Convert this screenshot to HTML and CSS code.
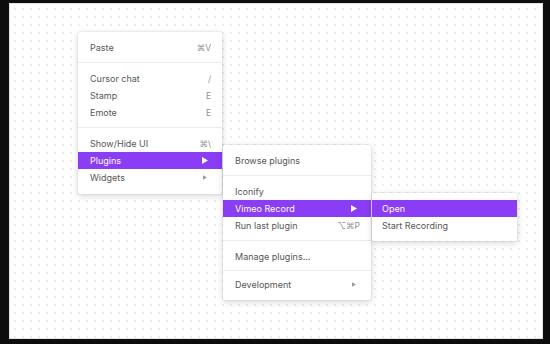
FILE: index.html
```html
<!DOCTYPE html>
<html lang="en">
<head>
  <meta charset="UTF-8">
  <title>Context menu</title>
  <link rel="stylesheet" href="styles.css">
</head>
<body>

  <div class="canvas">

    <div class="menu menu-main">
      <div class="item"><span>Paste</span><span class="key">⌘V</span></div>
      <div class="sep"></div>
      <div class="item"><span>Cursor chat</span><span class="key">/</span></div>
      <div class="item"><span>Stamp</span><span class="key">E</span></div>
      <div class="item"><span>Emote</span><span class="key">E</span></div>
      <div class="sep"></div>
      <div class="item"><span>Show/Hide UI</span><span class="key">⌘\</span></div>
      <div class="item active"><span>Plugins</span>
        <svg class="arrow" width="6" height="7" viewBox="0 0 6 7"><path d="M0 0L6 3.5L0 7Z"/></svg>
      </div>
      <div class="item"><span>Widgets</span>
        <svg class="arrow small" width="4" height="5" viewBox="0 0 6 7"><path d="M0 0L6 3.5L0 7Z"/></svg>
      </div>
    </div>

    <div class="menu menu-plugins">
      <div class="item"><span>Browse plugins</span></div>
      <div class="sep"></div>
      <div class="item"><span>Iconify</span></div>
      <div class="item active"><span>Vimeo Record</span>
        <svg class="arrow" width="6" height="7" viewBox="0 0 6 7"><path d="M0 0L6 3.5L0 7Z"/></svg>
      </div>
      <div class="item"><span>Run last plugin</span><span class="key">⌥⌘P</span></div>
      <div class="sep"></div>
      <div class="item"><span>Manage plugins...</span></div>
      <div class="sep tight"></div>
      <div class="item"><span>Development</span>
        <svg class="arrow small" width="4" height="5" viewBox="0 0 6 7"><path d="M0 0L6 3.5L0 7Z"/></svg>
      </div>
    </div>

    <div class="menu menu-vimeo">
      <div class="item active"><span>Open</span></div>
      <div class="item"><span>Start Recording</span></div>
    </div>

  </div>

</body>
</html>
```

FILE: styles.css
```css
body {
  margin: 0;
  padding: 3px 7px 5px 9px;
  background: #0d0d0d;
  font-family: Inter, 'Noto Sans', 'DejaVu Sans', sans-serif;
}

.canvas {
  position: relative;
  height: 336px;
  background-color: #fff;
  background-image: radial-gradient(circle, #ececec 0.7px, transparent 1.1px);
  background-size: 8px 8px;
  background-position: 2px 2px;
  box-shadow: inset 0 0 0 1px #e4e4e4;
}

.menu {
  position: absolute;
  background: #fff;
  padding: 7px 0 8px;
  border-radius: 2px;
  box-shadow: 0 2px 7px rgba(0,0,0,0.16), 0 0 0 1px rgba(0,0,0,0.04);
}

.menu-main {
  left: 69px;
  top: 29px;
  width: 144px;
}

.menu-plugins {
  left: 214px;
  top: 142px;
  width: 148px;
  padding-bottom: 7px;
}

.menu-vimeo {
  left: 363px;
  top: 190px;
  width: 145px;
  padding-bottom: 7px;
}

.item {
  height: 17px;
  display: flex;
  align-items: center;
  justify-content: space-between;
  padding: 0 11px 0 12px;
  font-size: 9px;
  color: #565656;
}

.menu-vimeo .item {
  padding-left: 10px;
}

.item .key {
  color: #8f8f8f;
  font-size: 8.5px;
}

.item.active {
  background: #8b3df6;
  color: #fff;
}

.arrow {
  fill: #fff;
  margin-right: 3px;
}

.arrow.small {
  fill: #9a9a9a;
  margin-right: 4px;
}

.sep {
  height: 1px;
  background: #ececec;
  margin: 6px 0 7px;
}

.sep.tight {
  margin: 5px 0 5px;
}
```
